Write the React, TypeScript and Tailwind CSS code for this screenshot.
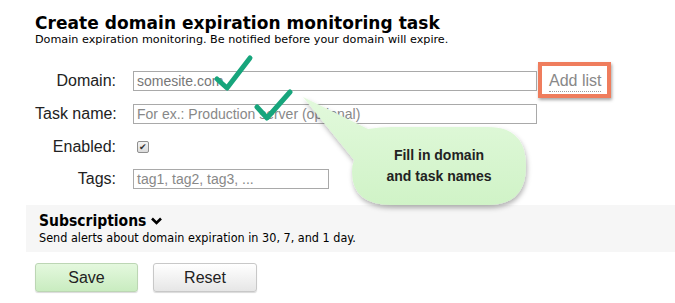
import React from 'react';

const sans = { fontFamily: '"Liberation Sans", Arial, sans-serif' };
const verd = { fontFamily: '"DejaVu Sans", Verdana, sans-serif' };
const cond = { fontFamily: '"DejaVu Sans Condensed", "Liberation Sans Narrow", "DejaVu Sans", sans-serif' };

function Check({ d }: { d: string }) {
    return <path d={d} fill="none" stroke="#17a57c" strokeWidth="5" strokeLinecap="round" strokeLinejoin="round" />;
}

export default function App() {
    return (
        <div className="relative w-[675px] h-[303px] bg-white overflow-hidden text-[#222]">
            {/* Header */}
            <div className="pl-[35px] pt-[13px]">
                <h1 className="text-[17px] leading-[20px] font-bold text-black tracking-[0.05px]" style={verd}>
                    Create domain expiration monitoring task
                </h1>
                <p className="text-[11.2px] leading-[14px] text-black" style={verd}>
                    Domain expiration monitoring. Be notified before your domain will expire.
                </p>
            </div>

            {/* Form */}
            <div className="pl-[35px] mt-[24px] flex flex-col" style={sans}>
                <div className="flex items-center h-[20px]">
                    <label className="w-[81px] text-right text-[16px] mr-[17px]">Domain:</label>
                    <div className="w-[404px] h-[20px] border border-[#a9a9a9] px-[3px] text-[14px] leading-[18px] text-[#777]">
                        somesite.com
                    </div>
                    <span className="relative ml-[12px] text-[16px] leading-[20px] text-[#888] border-b border-dotted border-[#999]">
                        Add list
                        <span className="absolute left-[-11px] top-[-9px] w-[73px] h-[36px] border-[4px] border-[#ef7d5d] shadow-[1px_2px_3px_rgba(0,0,0,0.35)]" />
                    </span>
                </div>

                <div className="flex items-center h-[20px] mt-[13px]">
                    <label className="w-[81px] text-right text-[16px] mr-[17px] whitespace-nowrap">Task name:</label>
                    <div className="w-[404px] h-[20px] border border-[#a9a9a9] px-[3px] text-[14px] leading-[18px] text-[#888]">
                        For ex.: Production server (optional)
                    </div>
                </div>

                <div className="flex items-center h-[20px] mt-[13px]">
                    <label className="w-[81px] text-right text-[16px] mr-[21px]">Enabled:</label>
                    <span className="w-[12px] h-[12px] border border-[#8f8f8f] rounded-[2px] bg-gradient-to-b from-[#f4f4f4] to-[#dcdcdc] flex items-center justify-center text-[9px] leading-none text-[#333]">
                        ✔
                    </span>
                </div>

                <div className="flex items-center h-[20px] mt-[12px]">
                    <label className="w-[81px] text-right text-[16px] mr-[17px]">Tags:</label>
                    <div className="w-[196px] h-[20px] border border-[#a9a9a9] px-[3px] text-[14px] leading-[18px] text-[#888]">
                        tag1, tag2, tag3, ...
                    </div>
                </div>
            </div>

            {/* Subscriptions */}
            <div className="ml-[26px] mt-[16px] bg-[#f6f6f6] pl-[13px] pt-[7px] pb-[7px]">
                <div className="flex items-center gap-[4px] text-[15.5px] leading-[18px] font-bold text-black" style={cond}>
                    Subscriptions
                    <svg width="13" height="10" viewBox="0 0 13 10">
                        <path d="M2 2.5 L6.5 7 L11 2.5" fill="none" stroke="#000" strokeWidth="2.6" />
                    </svg>
                </div>
                <p className="mt-[1px] text-[12.5px] leading-[14px] text-black" style={cond}>
                    Send alerts about domain expiration in 30, 7, and 1 day.
                </p>
            </div>

            {/* Buttons */}
            <div className="pl-[35px] mt-[11px] flex gap-[15px]" style={sans}>
                <button className="w-[103px] h-[29px] rounded-[3px] border border-[#bcd6b4] bg-gradient-to-b from-[#e4f8de] to-[#c9ecc0] text-[16px] text-[#222] shadow-[0_1px_1px_rgba(0,0,0,0.15)]">
                    Save
                </button>
                <button className="w-[104px] h-[29px] rounded-[3px] border border-[#c8c8c8] bg-gradient-to-b from-[#ffffff] to-[#e6e6e6] text-[16px] text-[#222] shadow-[0_1px_1px_rgba(0,0,0,0.15)]">
                    Reset
                </button>
            </div>

            {/* Annotations */}
            <svg className="absolute left-0 top-0 pointer-events-none" width="675" height="303" viewBox="0 0 675 303">
                <defs>
                    <linearGradient id="bub" x1="0" y1="0" x2="0" y2="1">
                        <stop offset="0" stopColor="#e2f9dc" />
                        <stop offset="1" stopColor="#d0f3c7" />
                    </linearGradient>
                    <filter id="sh" x="-20%" y="-20%" width="140%" height="140%">
                        <feDropShadow dx="1" dy="3" stdDeviation="2.5" floodColor="#000" floodOpacity="0.3" />
                    </filter>
                </defs>
                <path
                    d="M303 97 L368 129 Q380 127 392 127 L488 127 Q526 127 526 166 Q526 205 488 205 L392 205 Q352 205 352 172 Q352 165 354 160 Z"
                    fill="url(#bub)"
                    filter="url(#sh)"
                />
                <Check d="M217 79 L227 88 L250 58" />
                <Check d="M257 107 L267 118 L290 92" />
            </svg>
            <div className="absolute left-[352px] top-[145px] w-[174px] text-center text-[14px] leading-[21px] font-bold text-[#222]" style={sans}>
                Fill in domain<br />and task names
            </div>
        </div>
    );
}
